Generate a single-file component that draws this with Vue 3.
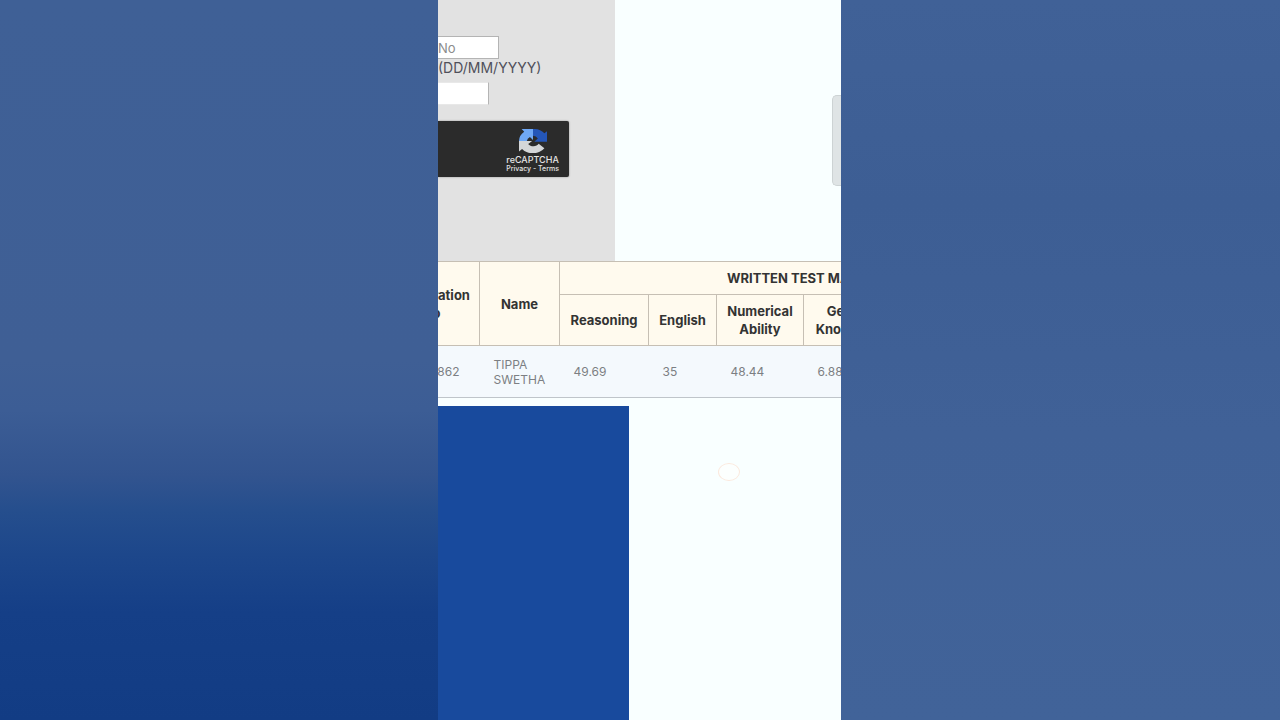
<script setup>
const subjects = [['Reasoning'], ['English'], ['Numerical', 'Ability'], ['General', 'Knowledge'], ['Total']]
const marks = ['49.69', '35', '48.44', '6.88', '']
</script>

<template>
  <div class="page">
    <div class="side side-left"></div>
    <main class="stage">
      <form class="search" @submit.prevent>
        <input class="field reg" type="text" placeholder="No" aria-label="Registration No" />
        <label class="hint" for="dob">(DD/MM/YYYY)</label>
        <input id="dob" class="field dob" type="text" />
        <div class="captcha">
          <div class="brand">
            <svg class="logo" viewBox="0 0 64 64" preserveAspectRatio="none" aria-hidden="true">
              <path fill="#2456b8" d="M64 34V6l-6 5A32 32 0 0 0 32 0v18a14 14 0 0 1 11 7l-8 9z" />
              <path fill="#6fa8f5" d="M32 0H6l6 7A32 32 0 0 0 0 32h18a14 14 0 0 1 7-11l7 8z" />
              <path fill="#d4d6d8" d="M0 32v28l7-7a32 32 0 0 0 51-2L45 39a14 14 0 0 1-24 1l9-8z" />
            </svg>
            <span class="name">reCAPTCHA</span>
            <span class="links"><a href="#">Privacy</a> - <a href="#">Terms</a></span>
          </div>
        </div>
      </form>

      <table class="results">
        <colgroup>
          <col class="c-reg" /><col class="c-name" /><col class="c-reason" /><col class="c-eng" />
          <col class="c-num" /><col class="c-gk" /><col class="c-total" />
        </colgroup>
        <thead>
          <tr class="top">
            <th rowspan="2" class="reg-head">Registration<br />No</th>
            <th rowspan="2">Name</th>
            <th colspan="5">WRITTEN TEST MARKS</th>
          </tr>
          <tr class="sub">
            <th v-for="s in subjects" :key="s[0]">
              <template v-for="(line, i) in s" :key="line"><br v-if="i" />{{ line }}</template>
            </th>
          </tr>
        </thead>
        <tbody>
          <tr>
            <td class="reg-no">862</td>
            <td>TIPPA<br />SWETHA</td>
            <td v-for="(m, i) in marks" :key="i">{{ m }}</td>
          </tr>
        </tbody>
      </table>

      <div class="lower">
        <div class="footer-block"></div>
        <div class="rest"><span class="touch"></span></div>
      </div>
      <div class="handle"></div>
    </main>
    <div class="side side-right"></div>
  </div>
</template>

<style>
body {
  margin: 0;
}
</style>

<style scoped>
.page {
  display: grid;
  grid-template-columns: 438fr 403fr 439fr;
  min-height: 100vh;
  font-family: Inter, Roboto, sans-serif;
}
.side-left {
  background: linear-gradient(#3f6096 0%, #3f5f95 50%, #3c5d95 57%, #32548f 66%, #254e8d 71%, #1d478b 77%, #153f87 85%, #123c84 100%);
}
.side-right {
  background: linear-gradient(#406197 0%, #3d5e94 28%, #406197 60%, #416399 100%);
}
.stage {
  position: relative;
  display: flex;
  flex-direction: column;
  min-width: 0;
  overflow: hidden;
  background: #f9ffff;
}
.search {
  box-sizing: border-box;
  display: flex;
  flex-direction: column;
  align-items: flex-start;
  width: 177px;
  height: 261px;
  padding-top: 36px;
  background: #e2e2e2;
}
.field {
  box-sizing: border-box;
  height: 23px;
  padding: 0;
  border: 1px solid #b4b4b4;
  border-left: 0;
  background: #fff;
  font: 13px Inter, sans-serif;
}
.field::placeholder {
  color: #8c8c8c;
  opacity: 1;
}
.reg {
  width: 61px;
}
.dob {
  width: 51px;
  border-color: #e8e8e8 #b4b4b4;
}
.hint {
  height: 23px;
  color: #50505a;
  font-size: 14px;
  line-height: 17px;
}
.captcha {
  display: flex;
  justify-content: flex-end;
  box-sizing: border-box;
  width: 131px;
  height: 56px;
  margin-top: 16px;
  padding: 8px 10px 0 0;
  border-radius: 0 2px 2px 0;
  background: #2b2b2b;
  box-shadow: 0 0 2px #8a8a8a;
}
.brand {
  display: flex;
  flex-direction: column;
  align-items: center;
  color: #e4e4e4;
}
.logo {
  width: 28px;
  height: 24px;
}
.name {
  margin-top: 2px;
  font-size: 9px;
  line-height: 10px;
  font-weight: 500;
}
.links {
  font-size: 7px;
  line-height: 8px;
  font-weight: 500;
  white-space: nowrap;
}
.links a {
  color: inherit;
  text-decoration: none;
}
.results {
  width: 668px;
  margin-left: -63px;
  table-layout: fixed;
  border-collapse: collapse;
}
.c-reg { width: 104px; }
.c-name { width: 80px; }
.c-reason { width: 89px; }
.c-eng { width: 68px; }
.c-num { width: 87px; }
.c-gk { width: 96px; }
.c-total { width: 144px; }
th {
  padding: 0;
  border: 1px solid #c6bfb4;
  background: #fffaee;
  color: #333;
  font-size: 13px;
  line-height: 18px;
  font-weight: 700;
}
.reg-head {
  padding-left: 8px;
}
.top {
  height: 33px;
}
.sub {
  height: 51px;
}
td {
  height: 51px;
  padding: 0 0 0 14px;
  border-bottom: 1px solid #bfc5ca;
  background: #f4f9fd;
  color: #7c7f83;
  font-size: 12px;
  line-height: 15px;
}
.reg-no {
  padding: 0 20px 0 0;
  text-align: right;
}
.lower {
  display: flex;
  flex: 1;
  margin-top: 8px;
}
.footer-block {
  width: 191px;
  background: #184a9d;
}
.rest {
  padding: 57px 0 0 89px;
}
.touch {
  display: block;
  box-sizing: border-box;
  width: 22px;
  height: 18px;
  border: 1px solid #fbe9de;
  border-radius: 50%;
  background: #fcfffe;
}
.handle {
  position: absolute;
  top: 95px;
  right: 0;
  box-sizing: border-box;
  width: 9px;
  height: 91px;
  border: 1px solid #cdd3d4;
  border-right: 0;
  border-radius: 5px 0 0 5px;
  background: #dfe4e5;
}
</style>
